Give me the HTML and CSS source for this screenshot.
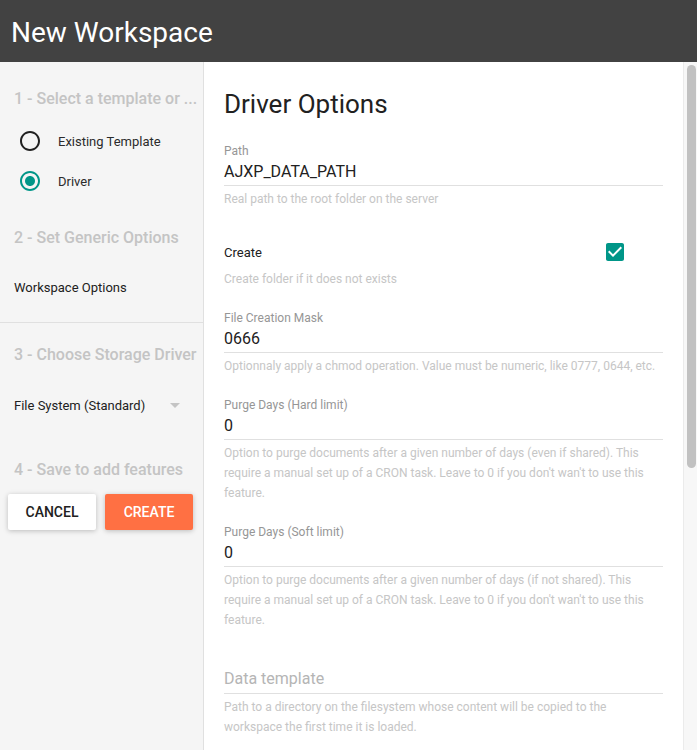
FILE: index.html
```html
<!DOCTYPE html>
<html lang="en">
<head>
<meta charset="utf-8">
<title>New Workspace</title>
<link rel="stylesheet" href="styles.css">
</head>
<body>
<div class="app">
  <header class="topbar">
    <h1 class="topbar-title">New Workspace</h1>
  </header>
  <div class="main">
    <aside class="sidebar">
      <div class="step-title step-1">1 - Select a template or ...</div>
      <div class="radio-list">
        <div class="radio-row">
          <svg class="radio-icon" viewBox="0 0 24 24" width="24" height="24"><path d="M12 2C6.48 2 2 6.48 2 12s4.48 10 10 10 10-4.48 10-10S17.52 2 12 2zm0 18c-4.42 0-8-3.58-8-8s3.58-8 8-8 8 3.58 8 8-3.58 8-8 8z"/></svg>
          <span class="radio-label">Existing Template</span>
        </div>
        <div class="radio-row radio-checked">
          <svg class="radio-icon" viewBox="0 0 24 24" width="24" height="24"><path d="M12 2C6.48 2 2 6.48 2 12s4.48 10 10 10 10-4.48 10-10S17.52 2 12 2zm0 18c-4.42 0-8-3.58-8-8s3.58-8 8-8 8 3.58 8 8-3.58 8-8 8z"/><path d="M12 7c-2.76 0-5 2.24-5 5s2.24 5 5 5 5-2.24 5-5-2.24-5-5-5z"/></svg>
          <span class="radio-label">Driver</span>
        </div>
      </div>
      <div class="step-title step-2">2 - Set Generic Options</div>
      <div class="side-item">Workspace Options</div>
      <hr class="side-divider">
      <div class="step-title step-3">3 - Choose Storage Driver</div>
      <div class="select-row">
        <span class="select-value">File System (Standard)</span>
        <svg class="select-arrow" viewBox="0 0 24 24" width="24" height="24"><path d="M7 10l5 5 5-5z"/></svg>
      </div>
      <div class="step-title step-4">4 - Save to add features</div>
      <div class="actions">
        <button class="btn btn-cancel">Cancel</button>
        <button class="btn btn-create">Create</button>
      </div>
    </aside>
    <section class="content">
      <div class="form">
        <h2 class="form-title">Driver Options</h2>

        <div class="field">
          <div class="field-label">Path</div>
          <div class="field-value">AJXP_DATA_PATH</div>
          <div class="field-hint">Real path to the root folder on the server</div>
        </div>

        <div class="check-field">
          <div class="check-row">
            <span class="check-label">Create</span>
            <svg class="check-icon" viewBox="0 0 24 24" width="24" height="24"><path d="M19 3H5c-1.11 0-2 .9-2 2v14c0 1.1.89 2 2 2h14c1.11 0 2-.9 2-2V5c0-1.1-.89-2-2-2zm-9 14l-5-5 1.41-1.41L10 14.17l7.59-7.59L19 8l-9 9z"/></svg>
          </div>
          <div class="field-hint check-hint">Create folder if it does not exists</div>
        </div>

        <div class="field">
          <div class="field-label">File Creation Mask</div>
          <div class="field-value">0666</div>
          <div class="field-hint">Optionnaly apply a chmod operation. Value must be numeric, like 0777, 0644, etc.</div>
        </div>

        <div class="field">
          <div class="field-label">Purge Days (Hard limit)</div>
          <div class="field-value">0</div>
          <div class="field-hint">Option to purge documents after a given number of days (even if shared). This require a manual set up of a CRON task. Leave to 0 if you don't wan't to use this feature.</div>
        </div>

        <div class="field">
          <div class="field-label">Purge Days (Soft limit)</div>
          <div class="field-value">0</div>
          <div class="field-hint">Option to purge documents after a given number of days (if not shared). This require a manual set up of a CRON task. Leave to 0 if you don't wan't to use this feature.</div>
        </div>

        <div class="field">
          <div class="field-label"></div>
          <div class="field-value field-placeholder">Data template</div>
          <div class="field-hint">Path to a directory on the filesystem whose content will be copied to the workspace the first time it is loaded.</div>
        </div>
      </div>
      <div class="scrollbar"><div class="scrollbar-thumb"></div></div>
    </section>
  </div>
</div>
</body>
</html>
```

FILE: styles.css
```css
html, body {
  margin: 0;
  padding: 0;
  height: 100%;
}

body {
  font-family: Roboto, "Noto Sans", "Liberation Sans", sans-serif;
  color: #212121;
  background: #ffffff;
  overflow: hidden;
}

.app {
  display: flex;
  flex-direction: column;
  height: 100vh;
}

/* Top bar */
.topbar {
  flex: 0 0 62px;
  height: 62px;
  box-sizing: border-box;
  background: #424242;
  display: flex;
  align-items: center;
  padding: 4px 0 0 11px;
}

.topbar-title {
  margin: 0;
  font-size: 28px;
  font-weight: 400;
  line-height: 32px;
  color: #ffffff;
}

.main {
  flex: 1;
  display: flex;
  min-height: 0;
}

/* Sidebar */
.sidebar {
  width: 203px;
  flex: 0 0 203px;
  background: #f5f5f5;
  border-right: 1px solid #e0e0e0;
  padding-top: 26px;
  box-sizing: content-box;
}

.step-title {
  font-size: 16px;
  line-height: 20px;
  font-weight: 500;
  color: #c4c4c4;
  padding: 1px 6px 0 14px;
  white-space: nowrap;
  overflow: hidden;
}

.radio-list {
  margin-top: 12px;
}

.radio-row {
  height: 40px;
  display: flex;
  align-items: center;
  padding-left: 18px;
}

.radio-icon {
  fill: #212121;
  flex: 0 0 24px;
}

.radio-checked .radio-icon {
  fill: #009688;
}

.radio-label {
  margin-left: 16px;
  font-size: 13px;
  color: #2b2b2b;
}

.step-2 {
  margin-top: 26px;
}

.side-item {
  margin-top: 30px;
  padding-left: 14px;
  font-size: 13px;
  line-height: 20px;
  color: #212121;
}

.side-divider {
  margin: 24px 0 0;
  border: 0;
  border-top: 1px solid #e0e0e0;
  height: 0;
}

.step-3 {
  margin-top: 21px;
}

.select-row {
  margin-top: 24px;
  height: 32px;
  display: flex;
  align-items: center;
  justify-content: space-between;
  padding: 0 16px 0 14px;
  font-size: 13px;
  color: #212121;
}

.select-arrow {
  fill: #c4c4c4;
}

.step-4 {
  margin-top: 38px;
}

.actions {
  margin-top: 14px;
  padding-left: 8px;
  display: flex;
  gap: 9px;
}

.btn {
  width: 88px;
  height: 36px;
  border: 0;
  border-radius: 2px;
  font-family: Roboto, "Noto Sans", "Liberation Sans", sans-serif;
  font-size: 14px;
  font-weight: 500;
  text-transform: uppercase;
  padding: 0;
  box-shadow: 0 1px 6px rgba(0, 0, 0, 0.12), 0 1px 4px rgba(0, 0, 0, 0.12);
  cursor: pointer;
}

.btn-cancel {
  background: #ffffff;
  color: #212121;
}

.btn-create {
  background: #ff7043;
  color: #ffffff;
}

/* Content */
.content {
  flex: 1;
  display: flex;
  min-width: 0;
  background: #ffffff;
}

.form {
  flex: 1;
  padding: 26px 20px 0;
  min-width: 0;
}

.form-title {
  margin: 0 0 23px;
  font-size: 26px;
  font-weight: 400;
  line-height: 32px;
  color: #212121;
}

.field {
  margin-bottom: 21px;
}

.field-label {
  font-size: 12px;
  line-height: 16px;
  height: 16px;
  color: #969696;
}

.field-value {
  margin-top: 1px;
  font-size: 16px;
  line-height: 24px;
  padding-bottom: 1px;
  border-bottom: 1px solid #e0e0e0;
  color: #212121;
}

.field-placeholder {
  line-height: 22px;
  padding-bottom: 3px;
  color: #b5b5b5;
}

.field-hint {
  margin-top: 3px;
  font-size: 12px;
  line-height: 20px;
  color: #c6c6c6;
}

.check-field {
  padding-top: 10px;
  margin-bottom: 21px;
}

.check-row {
  display: flex;
  align-items: center;
  justify-content: space-between;
  height: 24px;
  margin-right: 36px;
}

.check-label {
  font-size: 13px;
  color: #212121;
}

.check-icon {
  fill: #009688;
}

.check-hint {
  margin-top: 5px;
}

/* Scrollbar */
.scrollbar {
  flex: 0 0 13px;
  background: #f7f7f7;
  border-left: 1px solid #ebebeb;
}

.scrollbar-thumb {
  width: 9px;
  height: 403px;
  margin: 3px 0 0 3px;
  border-radius: 5px;
  background: #c1c1c1;
}
```
